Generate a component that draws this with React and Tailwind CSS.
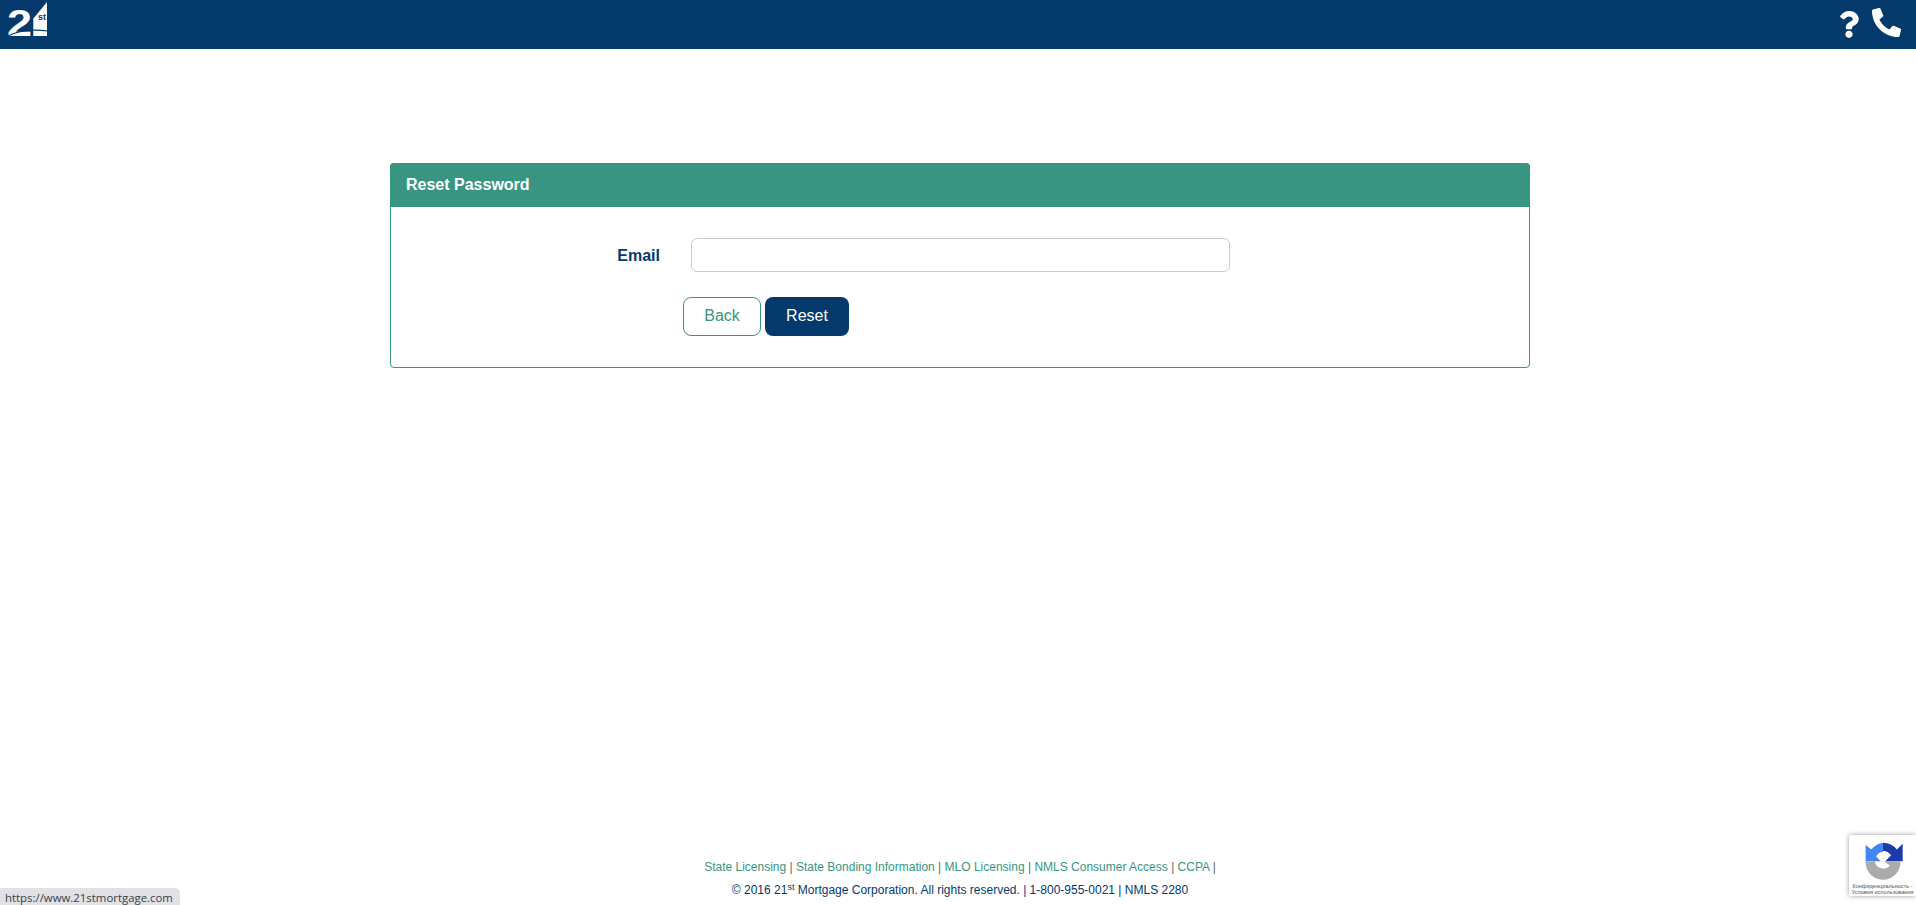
import { FaPhoneAlt, FaQuestion } from 'react-icons/fa'

function Logo() {
  return (
    <svg width="42" height="46" viewBox="0 0 42 46" className="ml-[7px] mt-[1px]">
      <text x="0" y="34.5" fontFamily="Liberation Sans" fontWeight="700" fontSize="37" fill="#fff" textLength="25" lengthAdjust="spacingAndGlyphs">2</text>
      <polygon points="40,1 40,35 26,35 26,18" fill="#fff" />
      <text x="31" y="19" fontFamily="Liberation Sans" fontWeight="700" fontSize="9" fill="#04396c">st</text>
      <path d="M1 35 C12 29 26 28 41 30" stroke="#04396c" strokeWidth="1.2" fill="none" />
      <path d="M26 18 L26 35" stroke="#04396c" strokeWidth="0.6" />
    </svg>
  )
}

function Recaptcha() {
  return (
    <div className="absolute right-0 top-[835px] flex h-[61px] w-[67px] flex-col items-center overflow-hidden rounded-l-[2px] bg-white pt-[3px] shadow-[0_0_5px_rgba(0,0,0,0.4)]">
      <svg width="44" height="44" viewBox="0 0 38 38" className="shrink-0">
        <path d="M19 4 A15 15 0 0 1 31 10 L36 5 L36 20 L21 20 L26 15 A9 9 0 0 0 19 11 Z" fill="#1c3aa9" />
        <path d="M19 4 L19 12 A7 7 0 0 0 13 16 L17 20 L4 20 L4 6 L9 10 A15 15 0 0 1 19 4 Z" fill="#4285f4" />
        <path d="M4 20 L12 20 A7.5 7.5 0 0 0 25 24 L20 20 L34 20 A15 15 0 0 1 4 22 Z" fill="#ababab" />
      </svg>
      <div className="mt-[2px] whitespace-nowrap text-center font-['Liberation_Sans',sans-serif] text-[5.6px] leading-[5.5px] text-[#555]">
        Конфиденциальность -<br />Условия использования
      </div>
    </div>
  )
}

export default function App() {
  return (
    <div className="relative flex h-[905px] flex-col overflow-hidden bg-white font-['Liberation_Sans',Arial,sans-serif]">
      <header className="flex h-[49px] items-start justify-between bg-[#04396c] text-white">
        <Logo />
        <div className="mr-[15px] flex items-start gap-[12px]">
          <FaQuestion className="mt-[11px] h-[27px] w-[22px]" />
          <FaPhoneAlt className="mt-[8px] h-[29px] w-[29px]" />
        </div>
      </header>

      <main className="flex-1 pl-[390px] pr-[386px] pt-[114px]">
        <section className="h-[205px] rounded-[4px] border border-[#389582]">
          <h1 className="-m-px flex h-[44px] items-center rounded-t-[4px] bg-[#389582] pl-[16px] text-[16px] font-bold text-white">
            Reset Password
          </h1>
          <div className="mt-[32px] flex items-center">
            <label className="w-[270px] pr-[1px] pt-[2px] text-right text-[16px] font-bold text-[#04396c]">Email</label>
            <input className="ml-[30px] h-[34px] w-[539px] rounded-[6px] border border-[#ccc] bg-white" />
          </div>
          <div className="ml-[292px] mt-[25px] flex gap-[4px]">
            <button className="h-[39px] w-[78px] rounded-[8px] border border-[#389582] bg-white pb-[2px] text-[16px] text-[#389582]">Back</button>
            <button className="h-[39px] w-[84px] rounded-[8px] bg-[#04396c] pb-[2px] text-[16px] text-white">Reset</button>
          </div>
        </section>
      </main>

      <footer className="flex h-[48px] flex-col items-center pl-[4px] text-[12px] leading-[16px]">
        <p className="mb-[7px] mt-[2px] text-[#666]">
          <a className="text-[#389582]">State Licensing</a> | <a className="text-[#389582]">State Bonding Information</a> | <a className="text-[#389582]">MLO Licensing</a> | <a className="text-[#389582]">NMLS Consumer Access</a> | <a className="text-[#389582]">CCPA</a> |
        </p>
        <p className="text-[#04396c]">
          © 2016 21<sup className="text-[9px]">st</sup> Mortgage Corporation. All rights reserved. | 1-800-955-0021 | NMLS 2280
        </p>
      </footer>

      <Recaptcha />
      <div className="absolute bottom-0 left-0 flex h-[17px] w-[180px] items-start rounded-tr-[5px] bg-[#dfe1e5] pl-[5px] pt-[1px] font-['Open_Sans',sans-serif] text-[11.4px] leading-[17px] text-[#3c4043]">
        https://www.21stmortgage.com
      </div>
    </div>
  )
}
